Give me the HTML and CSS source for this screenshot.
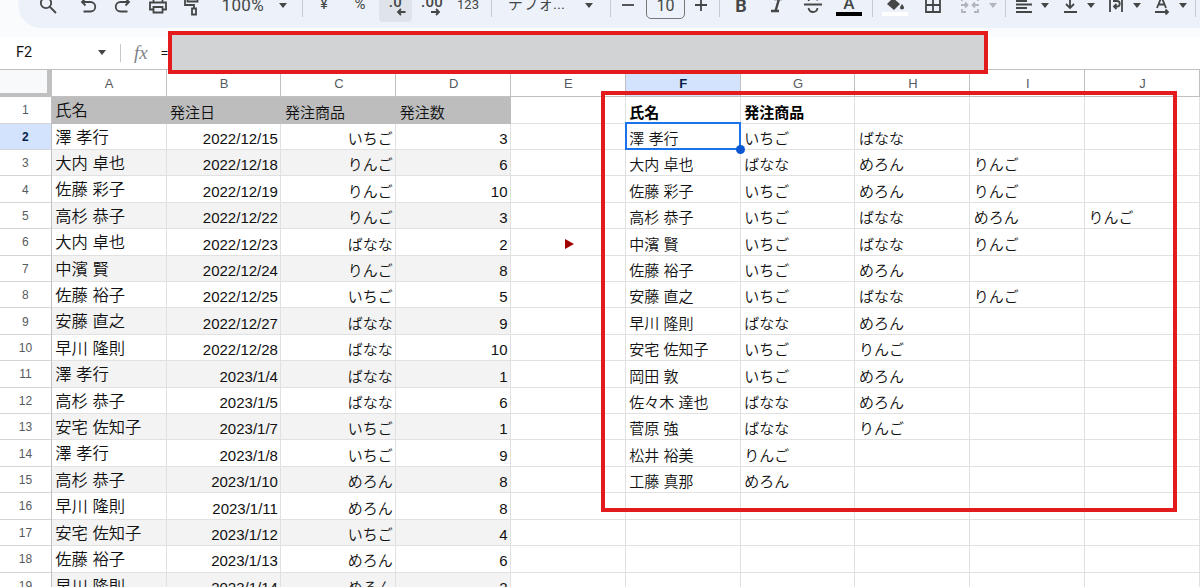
FILE: index.html
```html
<!DOCTYPE html>
<html lang="ja">
<head>
    <meta charset="UTF-8">
    <meta name="viewport" content="width=device-width, initial-scale=1.0">
    <title>発注リスト</title>
    <link rel="stylesheet" href="styles.css">
</head>
<body>
    <div class="app">
        <div class="toolbar">
            <div class="tool search"><svg width="20" height="20" viewBox="0 0 20 20"><circle cx="8" cy="8" r="5.2"/><path d="M12 12l6 6"/></svg></div>
            <div class="tool"><svg width="20" height="20" viewBox="0 0 20 20"><path d="M7.500 3.500L4 7l3.500 3.500M4 7h8.500a3.700 3.700 0 0 1 0 9.500H5.500"/></svg></div>
            <div class="tool"><svg width="20" height="20" viewBox="0 0 20 20"><path d="M12.500 3.500L16 7l-3.500 3.500M16 7H7.500a3.700 3.700 0 0 0 0 9.500h7"/></svg></div>
            <div class="tool"><svg width="20" height="20" viewBox="0 0 20 20"><path d="M5.500 7V3h9v4M5.500 14.500H2V7.500h16v7h-3.500M5.500 12h9v5.500h-9z"/></svg></div>
            <div class="tool"><svg width="20" height="22" viewBox="0 0 20 22"><path d="M4.500 3h10v4.500h-10zM4.500 5H2v6h9v3"/><path d="M9 14.500h4v6H9z"/></svg></div>
            <div class="tool zoom">100%</div>
            <div class="caret wide"></div>
            <div class="sep s9"></div>
            <div class="tool yen">¥</div>
            <div class="tool percent">%</div>
            <div class="tool decimal active">.0<svg width="10" height="8" viewBox="0 0 10 8"><path d="M9.500 4H2M5 1L2 4l3 3"/></svg></div>
            <div class="tool decimal more">.00<svg width="10" height="8" viewBox="0 0 10 8"><path d="M0 4h8M5 1l3 3-3 3"/></svg></div>
            <div class="tool num">123</div>
            <div class="sep s14"></div>
            <div class="tool font">デフォ...</div>
            <div class="caret wide"></div>
            <div class="sep s12"></div>
            <div class="tool minus"><svg width="14" height="14" viewBox="0 0 14 14"><path d="M1 7h12"/></svg></div>
            <div class="size">10</div>
            <div class="tool plus"><svg width="14" height="14" viewBox="0 0 14 14"><path d="M1 7h12M7 1v12"/></svg></div>
            <div class="sep s7"></div>
            <div class="tool style bold">B</div>
            <div class="tool style"><svg width="16" height="16" viewBox="0 0 16 16"><path class="thick" d="M5 2h8M2 14h8M10 2L6.500 14"/></svg></div>
            <div class="tool style"><svg width="20" height="20" viewBox="0 0 20 20"><path d="M1 9.500h18M14.500 5.500C14 3.500 12.500 2.500 10 2.500S5.500 4 5.800 6M5.500 13c.5 2.500 2 4 4.500 4s4.600-1.500 4.300-4"/></svg></div>
            <div class="tool style color-text"><span>A</span></div>
            <div class="sep s10"></div>
            <div class="tool style color-fill"><svg width="20" height="18" viewBox="0 0 20 18"><path class="solid" d="M2 8L8 2l7 6-6 6zM17 8c2 2.500 2.200 3.500 1.800 4.500-.5 1.200-3 1.200-3.600 0-.4-1 .2-2.500 1.800-4.500z"/></svg></div>
            <div class="tool borders"><svg width="18" height="18" viewBox="0 0 18 18"><path d="M2 2h14v14H2zM9 2v14M2 9h14"/></svg></div>
            <div class="tool merge"><svg width="20" height="18" viewBox="0 0 20 18"><path d="M6 2H2v3M14 2h4v3M6 16H2v-3M14 16h4v-3M1 9h6M5 6.500L7.500 9 5 11.500M19 9h-6M15 6.500L12.500 9l2.500 2.500"/></svg></div>
            <div class="caret faded"></div>
            <div class="sep s12"></div>
            <div class="group"><div class="tool"><svg width="18" height="18" viewBox="0 0 18 18"><path d="M1 1.500h16M1 5h11M1 8.500h16M1 12h11M1 16h16"/></svg></div><div class="caret"></div></div>
            <div class="group"><div class="tool"><svg width="16" height="18" viewBox="0 0 16 18"><path d="M2 16h13M8 0v12M4 8l4 4 4-4"/></svg></div><div class="caret"></div></div>
            <div class="group"><div class="tool"><svg width="16" height="18" viewBox="0 0 16 18"><path d="M2 0v16M14 0v16M5 5h4a2.700 2.700 0 0 1 0 5.500H6M8.500 8L6 10.500 8.500 13"/></svg></div><div class="caret"></div></div>
            <div class="group"><div class="tool"><svg width="18" height="20" viewBox="0 0 18 20"><path d="M4 13L8.500 2 13 13M5.500 9.500h6M2 17h13M12.500 14.500L15 17l-2.500 2.500"/></svg></div><div class="caret"></div></div>
            <div class="sep s1"></div>
        </div>

        <div class="formula-bar">
            <div class="name-box">F2</div>
            <div class="caret"></div>
            <div class="divider"></div>
            <div class="fx">fx</div>
            <div class="formula">=</div>
        </div>

        <div class="sheet" id="sheet"></div>

        <div class="mark formula-mark"></div>
        <div class="mark result-mark"></div>
    </div>

    <script>
        const sheet = document.getElementById('sheet');
        const columns = ['A', 'B', 'C', 'D', 'E', 'F', 'G', 'H', 'I', 'J'];

        const orders = [
            ['氏名', '発注日', '発注商品', '発注数'],
            ['澤 孝行', '2022/12/15', 'いちご', '3'],
            ['大内 卓也', '2022/12/18', 'りんご', '6'],
            ['佐藤 彩子', '2022/12/19', 'りんご', '10'],
            ['高杉 恭子', '2022/12/22', 'りんご', '3'],
            ['大内 卓也', '2022/12/23', 'ばなな', '2'],
            ['中濱 賢', '2022/12/24', 'りんご', '8'],
            ['佐藤 裕子', '2022/12/25', 'いちご', '5'],
            ['安藤 直之', '2022/12/27', 'ばなな', '9'],
            ['早川 隆則', '2022/12/28', 'ばなな', '10'],
            ['澤 孝行', '2023/1/4', 'ばなな', '1'],
            ['高杉 恭子', '2023/1/5', 'ばなな', '6'],
            ['安宅 佐知子', '2023/1/7', 'いちご', '1'],
            ['澤 孝行', '2023/1/8', 'いちご', '9'],
            ['高杉 恭子', '2023/1/10', 'めろん', '8'],
            ['早川 隆則', '2023/1/11', 'めろん', '8'],
            ['安宅 佐知子', '2023/1/12', 'いちご', '4'],
            ['佐藤 裕子', '2023/1/13', 'めろん', '6'],
            ['早川 隆則', '2023/1/14', 'めろん', '2']
        ];

        const results = [
            ['氏名', '発注商品'],
            ['澤 孝行', 'いちご', 'ばなな'],
            ['大内 卓也', 'ばなな', 'めろん', 'りんご'],
            ['佐藤 彩子', 'いちご', 'めろん', 'りんご'],
            ['高杉 恭子', 'いちご', 'ばなな', 'めろん', 'りんご'],
            ['中濱 賢', 'いちご', 'ばなな', 'りんご'],
            ['佐藤 裕子', 'いちご', 'めろん'],
            ['安藤 直之', 'いちご', 'ばなな', 'りんご'],
            ['早川 隆則', 'ばなな', 'めろん'],
            ['安宅 佐知子', 'いちご', 'りんご'],
            ['岡田 敦', 'いちご', 'めろん'],
            ['佐々木 達也', 'ばなな', 'めろん'],
            ['菅原 強', 'ばなな', 'りんご'],
            ['松井 裕美', 'りんご'],
            ['工藤 真那', 'めろん']
        ];

        function addCell(text, className) {
            const div = document.createElement('div');
            div.className = className;
            div.textContent = text;
            sheet.appendChild(div);
            return div;
        }

        // Column headers
        addCell('', 'corner');
        columns.forEach(name => {
            addCell(name, name === 'F' ? 'col-head selected' : 'col-head');
        });

        // Rows
        orders.forEach((order, r) => {
            const result = results[r] || [];
            addCell(r + 1, r === 1 ? 'row-head selected' : 'row-head');
            columns.forEach((name, c) => {
                let className = `cell col-${name.toLowerCase()}`;
                if (c < 4) {
                    className += r === 0 ? ' title' : r % 2 === 0 ? ' band' : '';
                    if (r > 0 && c > 0) className += ' right';
                }
                if (c > 4 && r === 0) className += ' strong';
                if (name === 'F' && r === 1) className += ' current';
                if (name === 'E' && r === 5) className += ' arrow';
                addCell(c < 4 ? order[c] : result[c - 5] || '', className);
            });
        });
    </script>
</body>
</html>
```
FILE: styles.css
```css
body {
    margin: 0;
    background-color: #fff;
    font-family: 'Liberation Sans', 'Noto Sans CJK JP', sans-serif;
    color: #111;
}
.app {
    position: relative;
    height: 587px;
    overflow: hidden;
    background: linear-gradient(#f9fbfd 36px, #fff 38px);
}

/* Toolbar */
.toolbar {
    box-sizing: border-box;
    display: flex;
    align-items: center;
    height: 46px;
    margin: -18px 0 0 18px;
    padding-left: 7.5px;
    background-color: #edf2fa;
    border-radius: 24px 0 0 24px;
    color: #444746;
    font-family: Roboto, 'Noto Sans CJK JP', sans-serif;
}
.toolbar > * {
    flex-shrink: 0;
}
.tool {
    box-sizing: border-box;
    display: flex;
    align-items: center;
    justify-content: center;
    width: 35px;
    height: 34px;
    white-space: nowrap;
}
.toolbar svg {
    flex-shrink: 0;
    fill: none;
    stroke: #444746;
    stroke-width: 1.8;
}
.toolbar .solid {
    fill: #444746;
    stroke: none;
}
.toolbar .thick {
    stroke-width: 2.4;
}
.search {
    width: 45px;
}
.zoom {
    width: 57.5px;
    padding-left: 7px;
    font-size: 17px;
    letter-spacing: 0.3px;
}
.caret {
    display: flex;
    justify-content: center;
    width: 20px;
}
.caret::before {
    content: "";
    border: 4.5px solid transparent;
    border-top: 5px solid #444746;
    border-bottom: 0;
}
.caret.wide {
    width: 30px;
}
.caret.faded {
    width: 12px;
    opacity: 0.35;
}
.sep {
    display: flex;
    justify-content: center;
}
.sep::before {
    content: "";
    width: 1px;
    height: 24px;
    background-color: #c7cbd1;
}
.s1 { width: 1px; }
.s7 { width: 7px; }
.s9 { width: 9px; }
.s10 { width: 10px; }
.s12 { width: 12px; }
.s14 { width: 14px; }
.yen {
    width: 34px;
    padding-bottom: 3px;
    font-size: 15px;
}
.percent {
    width: 38px;
    padding-bottom: 2px;
    font-size: 15px;
}
.decimal {
    position: relative;
    width: 33px;
    padding-bottom: 7px;
    font-size: 15px;
    font-weight: 500;
    letter-spacing: 0.3px;
}
.decimal svg {
    position: absolute;
    right: 6px;
    bottom: 6px;
}
.active {
    background-color: #dfe4eb;
    border-radius: 4px;
}
.more {
    width: 40px;
}
.more svg {
    right: 11px;
}
.num {
    width: 32px;
    padding-bottom: 2px;
    font-size: 13px;
}
.font {
    width: 76px;
    padding: 0 0 5px 10px;
    justify-content: flex-start;
    font-size: 15px;
}
.minus {
    width: 24px;
}
.size {
    box-sizing: border-box;
    width: 39px;
    height: 27px;
    margin: 0 1px 0 6px;
    border: 1px solid #747775;
    border-radius: 5px;
    font-size: 16px;
    line-height: 25px;
    text-align: center;
}
.plus {
    width: 30px;
}
.style {
    width: 36px;
}
.bold {
    font-size: 18px;
    font-weight: bold;
}
.color-text,
.color-fill {
    position: relative;
    font-size: 17px;
    font-weight: 500;
}
.color-text span {
    margin-bottom: 4px;
}
.color-text::after,
.color-fill::after {
    content: "";
    position: absolute;
    left: 5px;
    bottom: 6px;
    width: 26px;
    height: 4px;
    background-color: #000;
}
.color-fill::after {
    background-color: #fff;
}
.borders {
    width: 40px;
}
.merge {
    width: 34px;
    opacity: 0.35;
}
.group {
    display: flex;
    align-items: center;
    margin: 0 2px;
}
.group .tool {
    width: 22px;
}

/* Formula bar */
.formula-bar {
    box-sizing: border-box;
    display: flex;
    align-items: center;
    height: 42px;
    padding: 8px 0 0 16px;
    border-bottom: 1px solid #c0c0c0;
}
.name-box {
    width: 76px;
    font-size: 14.5px;
    font-family: Roboto, sans-serif;
}
.divider {
    width: 1px;
    height: 18px;
    margin-left: 8px;
    background-color: #c7c7c7;
}
.fx {
    width: 27px;
    margin-left: 13px;
    color: #808387;
    font-family: 'Liberation Serif', serif;
    font-size: 19px;
    font-style: italic;
}
.formula {
    font-size: 12px;
}

/* Sheet */
.sheet {
    display: grid;
    grid-template-columns: 51.8px repeat(10, 114.82px);
    grid-template-rows: 27.2px;
    grid-auto-rows: 26.42px;
}
.corner {
    background-color: #f8f9fa;
    border: solid #c0c0c0;
    border-width: 0 5px 4px 0;
}
.col-head,
.row-head {
    display: flex;
    align-items: center;
    justify-content: center;
    box-sizing: border-box;
    border: solid #c0c0c0;
    border-width: 0 1px 1px 0;
    color: #575b5f;
    font-size: 13px;
}
.row-head {
    padding-top: 1px;
    border-bottom-color: #d5d5d5;
    font-size: 12px;
}
.col-head {
    padding-left: 1px;
}
.selected {
    background-color: #d3e3fd;
    color: #041e49;
    font-weight: bold;
}
.cell {
    box-sizing: border-box;
    min-width: 0;
    padding: 4.4px 2.5px 0 3.5px;
    border: solid #e1e1e1;
    border-width: 0 1px 1px 0;
    font-size: 15px;
    font-weight: 350;
    line-height: 22px;
    white-space: nowrap;
}
.col-a {
    padding-top: 2px;
    font-size: 16.3px;
}
.title {
    background-color: #bdbdbd;
    border-color: #bdbdbd;
}
.band {
    background-color: #f3f3f3;
}
.right {
    text-align: right;
}
.strong {
    color: #000;
    font-weight: bold;
}
.current {
    position: relative;
}
.current::before {
    content: "";
    position: absolute;
    inset: -2px -1px -1px -1px;
    border: 2px solid #1a73e8;
}
.current::after {
    content: "";
    position: absolute;
    right: -5px;
    bottom: -5px;
    width: 9px;
    height: 9px;
    background-color: #0b57d0;
    border-radius: 50%;
}
.arrow {
    display: flex;
    align-items: center;
    justify-content: center;
    padding: 4px 2px 0 5px;
}
.arrow::before {
    content: "";
    border: 5.5px solid transparent;
    border-left: 9.5px solid #a00000;
    border-right: 0;
}

/* Red frames drawn over the sheet */
.mark {
    position: absolute;
    box-sizing: border-box;
    border: 4px solid #e31b1c;
}
.formula-mark {
    left: 168px;
    top: 31px;
    width: 820px;
    height: 43px;
    background-color: #d1d3d4;
}
.result-mark {
    left: 601px;
    top: 91px;
    width: 576px;
    height: 421px;
}
```
